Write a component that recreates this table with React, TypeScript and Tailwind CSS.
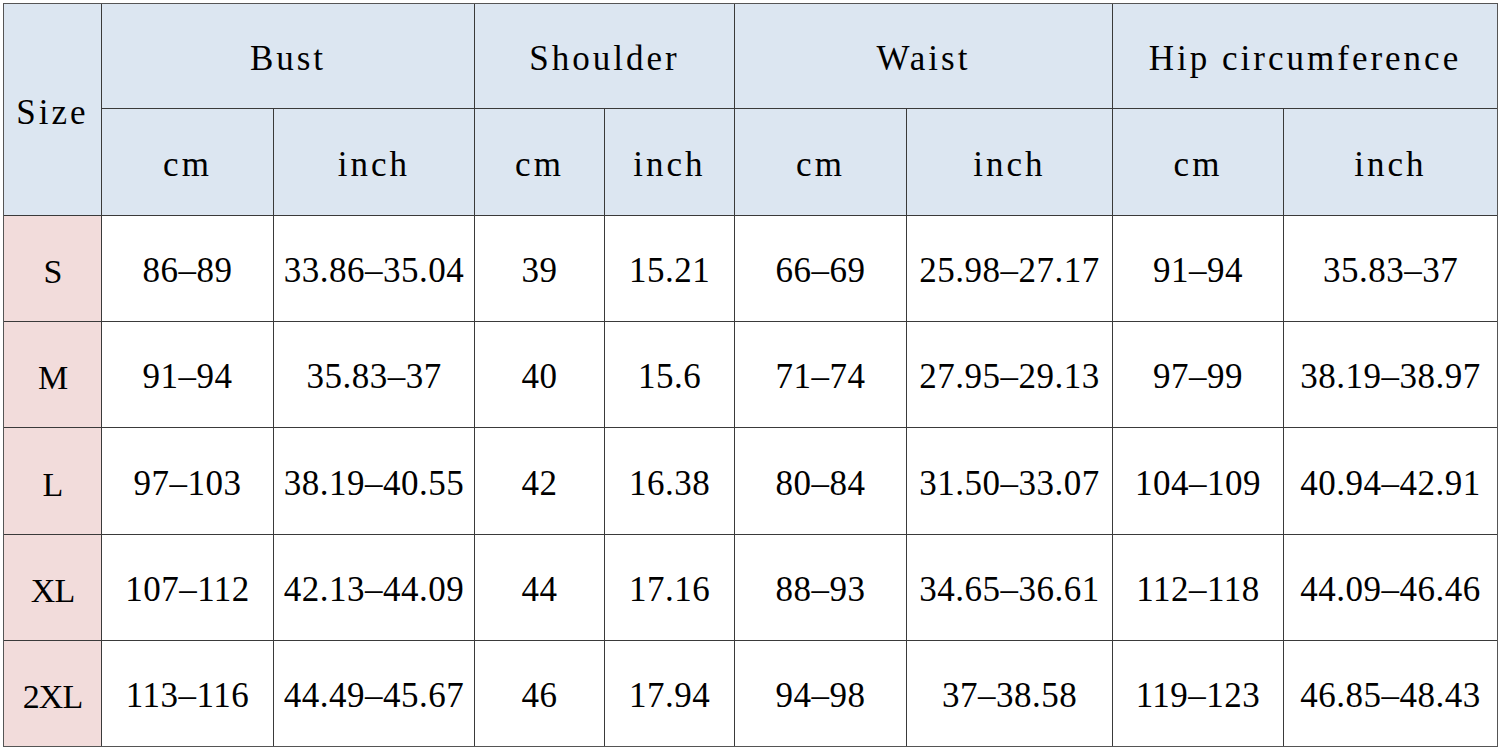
const groups = ["Bust", "Shoulder", "Waist", "Hip circumference"];

const rows: string[][] = [
  ["S", "86–89", "33.86–35.04", "39", "15.21", "66–69", "25.98–27.17", "91–94", "35.83–37"],
  ["M", "91–94", "35.83–37", "40", "15.6", "71–74", "27.95–29.13", "97–99", "38.19–38.97"],
  ["L", "97–103", "38.19–40.55", "42", "16.38", "80–84", "31.50–33.07", "104–109", "40.94–42.91"],
  ["XL", "107–112", "42.13–44.09", "44", "17.16", "88–93", "34.65–36.61", "112–118", "44.09–46.46"],
  ["2XL", "113–116", "44.49–45.67", "46", "17.94", "94–98", "37–38.58", "119–123", "46.85–48.43"],
];

const head = "flex items-center justify-center bg-[#dce6f1] pt-[7px] text-[35px] tracking-[3px] text-black";
const cell = "flex items-center justify-center bg-white pt-[6px] text-[35px] tracking-[0.5px] text-black";

export default function App() {
  return (
    <div className="min-h-screen bg-white pl-[3px] pt-[3px] font-['Liberation_Serif',serif]">
      <div className="grid w-fit grid-cols-[97px_171px_200px_129px_129px_171px_205px_170px_213px] grid-rows-[104px_106px_105px_105px_106px_105px_105px] gap-px border border-[#555] bg-[#3a3a3a]">
        <div className={`${head} row-span-2 tracking-[2px]`}>Size</div>
        {groups.map((g) => (
          <div key={g} className={`${head} col-span-2`}>
            {g}
          </div>
        ))}
        {groups.map((g) => (
          <>
            <div key={g + "cm"} className={head}>cm</div>
            <div key={g + "in"} className={head}>inch</div>
          </>
        ))}
        {rows.map((r) =>
          r.map((v, i) => (
            <div
              key={r[0] + i}
              className={
                i === 0
                  ? "flex items-center justify-center bg-[#f2dcdb] pt-[6px] text-[34px] tracking-[-1px] text-black"
                  : cell
              }
            >
              {v}
            </div>
          ))
        )}
      </div>
    </div>
  );
}
